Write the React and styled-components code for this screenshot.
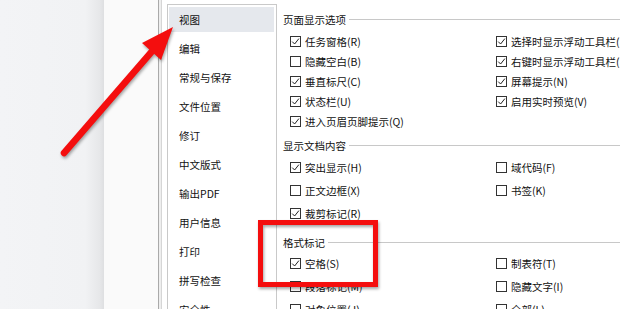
import React from 'react';
import styled, { createGlobalStyle } from 'styled-components';

const GlobalStyle = createGlobalStyle`
  html, body {
    margin: 0;
    padding: 0;
    background: #ffffff;
  }
  body {
    font-family: "Noto Sans CJK SC", "Noto Sans", sans-serif;
  }
`

const navItems = ['视图', '编辑', '常规与保存', '文件位置', '修订', '中文版式', '输出PDF', '用户信息', '打印', '拼写检查', '安全性'];

const sections = [
  {
    title: '页面显示选项',
    rowHeight: 20,
    top: 8,
    gap: 5,
    rows: [
      [{ label: '任务窗格(R)', checked: true }, { label: '选择时显示浮动工具栏(', checked: true }],
      [{ label: '隐藏空白(B)', checked: false }, { label: '右键时显示浮动工具栏(', checked: true }],
      [{ label: '垂直标尺(C)', checked: true }, { label: '屏幕提示(N)', checked: true }],
      [{ label: '状态栏(U)', checked: true }, { label: '启用实时预览(V)', checked: true }],
      [{ label: '进入页眉页脚提示(Q)', checked: true }, null],
    ],
  },
  {
    title: '显示文档内容',
    rowHeight: 23,
    top: 7,
    gap: 4,
    rows: [
      [{ label: '突出显示(H)', checked: true }, { label: '域代码(F)', checked: false }],
      [{ label: '正文边框(X)', checked: false }, { label: '书签(K)', checked: false }],
      [{ label: '裁剪标记(R)', checked: true }, null],
    ],
  },
  {
    title: '格式标记',
    rowHeight: 23,
    top: 10,
    gap: 3,
    rows: [
      [{ label: '空格(S)', checked: true }, { label: '制表符(T)', checked: false }],
      [{ label: '段落标记(M)', checked: false }, { label: '隐藏文字(I)', checked: false }],
      [{ label: '对象位置(J)', checked: false }, { label: '全部(L)', checked: false }],
    ],
  },
];

function Check({ checked }) {
  return (
    <Box>
      {checked && (
        <svg width="9" height="9" viewBox="0 0 9 9">
          <path d="M1.2 4.6 L3.6 7 L7.9 1.6" fill="none" stroke="#222" strokeWidth="1" />
        </svg>
      )}
    </Box>
  )
}

export default function App() {
  return (
    <>
      <GlobalStyle />
      <Screen>
        <Backdrop />
        <Strip />
        <Frame />
        <Dialog>
          <NavList>
            {navItems.map((item, i) => (
              <NavItem key={item} active={i === 0}>{item}</NavItem>
            ))}
          </NavList>
          <Content>
            {sections.map((s) => (
              <Section key={s.title} top={s.top}>
                <Heading gap={s.gap}>
                  <span>{s.title}</span>
                  <Rule />
                </Heading>
                {s.rows.map((row, r) => (
                  <Row key={r} h={s.rowHeight}>
                    {row.map((cell, c) => (
                      cell ? (
                        <Option key={c}>
                          <Check checked={cell.checked} />
                          <span>{cell.label}</span>
                        </Option>
                      ) : <span key={c} />
                    ))}
                  </Row>
                ))}
              </Section>
            ))}
          </Content>
        </Dialog>
        <Overlay width="620" height="309" viewBox="0 0 620 309">
          <g style={{ filter: 'drop-shadow(1px 2px 1.5px rgba(0,0,0,0.35))' }}>
            <line x1="64" y1="153" x2="154" y2="49" stroke="#f40e0e" strokeWidth="6.5" strokeLinecap="round" />
            <polygon points="173,27 142,43 161,60" fill="#f40e0e" />
            <rect x="260.5" y="222.5" width="115" height="62" fill="none" stroke="#f40e0e" strokeWidth="5" />
          </g>
        </Overlay>
      </Screen>
    </>
  )
}

const Screen = styled.div`
  position: relative;
  width: 620px;
  height: 309px;
  overflow: hidden;
  display: flex;
  background: #ffffff;
`
const Backdrop = styled.div`
  width: 104px;
  flex: none;
  background: linear-gradient(to right, #f3f4f6 0%, #f1f2f4 82%, #e6e7e9 96%, #dedfe1 100%);
`
const Strip = styled.div`
  width: 54px;
  flex: none;
  background: #fafafa;
`
const Frame = styled.div`
  width: 2px;
  flex: none;
  border-left: 1px solid #a9a9a9;
  border-right: 1px solid #d6d6d6;
  background: #eeeeee;
`
const Dialog = styled.div`
  flex: 1;
  display: flex;
  padding: 4px 0 0 5px;
  background: #ffffff;
  color: #111111;
  font-size: 10.5px;
`
const NavList = styled.div`
  width: 108px;
  flex: none;
  border: 1px solid #c9c9c9;
  border-bottom: none;
  padding-top: 2px;
`
const NavItem = styled.div`
  height: 25px;
  line-height: 25px;
  margin: 0 2px 4px 1px;
  padding-left: 10px;
  background: ${(p) => (p.active ? '#e5e8ed' : 'transparent')};
  white-space: nowrap;
`
const Content = styled.div`
  flex: 1;
  padding-left: 6px;
  min-width: 0;
`
const Section = styled.div`
  margin-top: ${(p) => p.top}px;
`
const Heading = styled.div`
  display: flex;
  align-items: center;
  height: 14px;
  gap: 3px;
  margin-bottom: ${(p) => p.gap}px;
  white-space: nowrap;
`
const Rule = styled.div`
  flex: 1;
  height: 1px;
  background: #c8c8c8;
`
const Row = styled.div`
  display: grid;
  grid-template-columns: 206px 1fr;
  height: ${(p) => p.h}px;
  padding-left: 7px;
  align-items: center;
`
const Option = styled.div`
  display: flex;
  align-items: center;
  gap: 4px;
  white-space: nowrap;
`
const Box = styled.div`
  width: 11px;
  height: 11px;
  box-sizing: border-box;
  border: 1px solid #333333;
  background: #ffffff;
  display: flex;
  align-items: center;
  justify-content: center;
  flex: none;
`
const Overlay = styled.svg`
  position: absolute;
  left: 0;
  top: 0;
  pointer-events: none;
`
